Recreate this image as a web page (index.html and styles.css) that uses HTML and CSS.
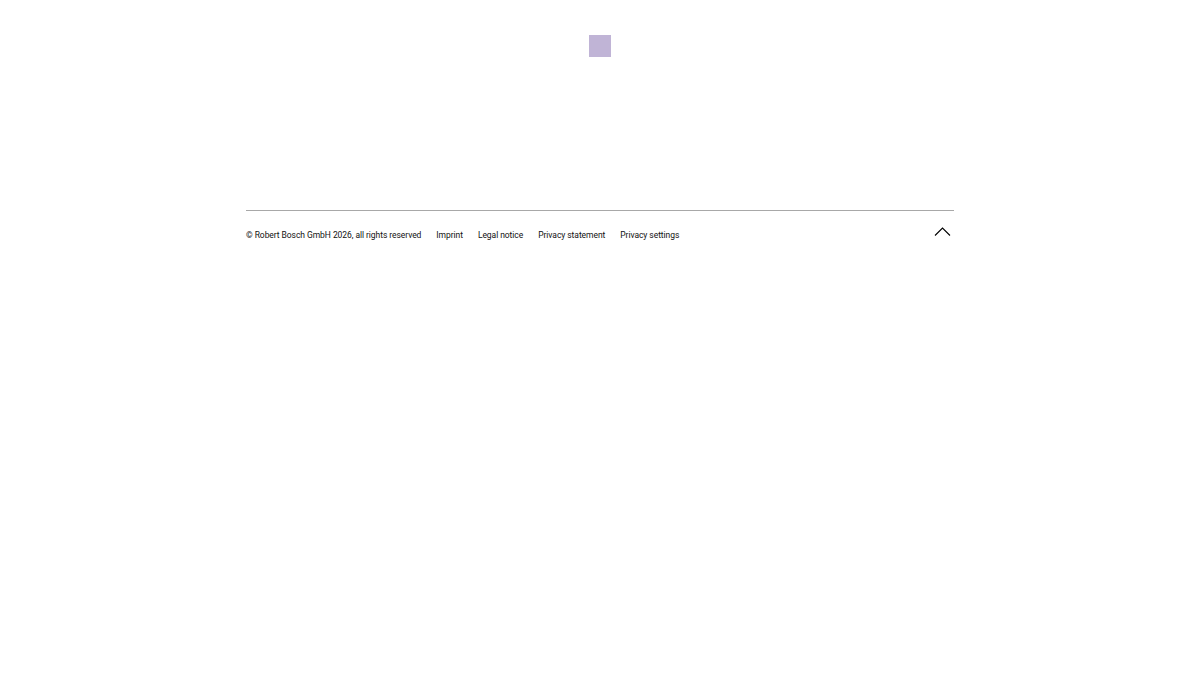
FILE: index.html
```html
<!DOCTYPE html>
<html>
<head>
<meta charset="utf-8">
<link rel="stylesheet" href="styles.css">
</head>
<body>
<div class="page">
  <header class="top">
    <div class="logo-box"></div>
  </header>
  <footer class="footer">
    <div class="footer-row">
      <nav class="links">
        <span class="copy">© Robert Bosch GmbH 2026, all rights reserved</span>
        <a href="#">Imprint</a>
        <a href="#">Legal notice</a>
        <a href="#">Privacy statement</a>
        <a href="#">Privacy settings</a>
      </nav>
      <a class="to-top" href="#" aria-label="Back to top">
        <svg width="17" height="10" viewBox="0 0 17 10"><path d="M1 9.5 L8.5 2 L16 9.5" fill="none" stroke="#000" stroke-width="1.1"/></svg>
      </a>
    </div>
  </footer>
</div>
</body>
</html>
```
FILE: styles.css
```css
html, body {
  margin: 0;
  padding: 0;
  background: #fff;
}
body {
  font-family: Roboto, "Noto Sans", "Liberation Sans", sans-serif;
  color: #000;
}
.page {
  width: 708px;
  margin: 0 auto;
}
.top {
  display: flex;
  justify-content: center;
  padding-top: 35px;
  height: 210px;
  box-sizing: border-box;
}
.logo-box {
  width: 22px;
  height: 22px;
  background: #c0b4d6;
}
.footer {
  border-top: 1px solid #a8a8a8;
}
.footer-row {
  display: flex;
  justify-content: space-between;
  align-items: flex-start;
  padding-top: 15px;
}
.links {
  display: flex;
  gap: 15px;
  font-size: 8.5px;
  letter-spacing: -0.06px;
  line-height: 18px;
}
.links a, .copy {
  color: #111;
  text-decoration: none;
}
.to-top {
  display: block;
  margin-right: 3px;
  margin-top: 0;
}
.to-top svg { display: block; }
```
